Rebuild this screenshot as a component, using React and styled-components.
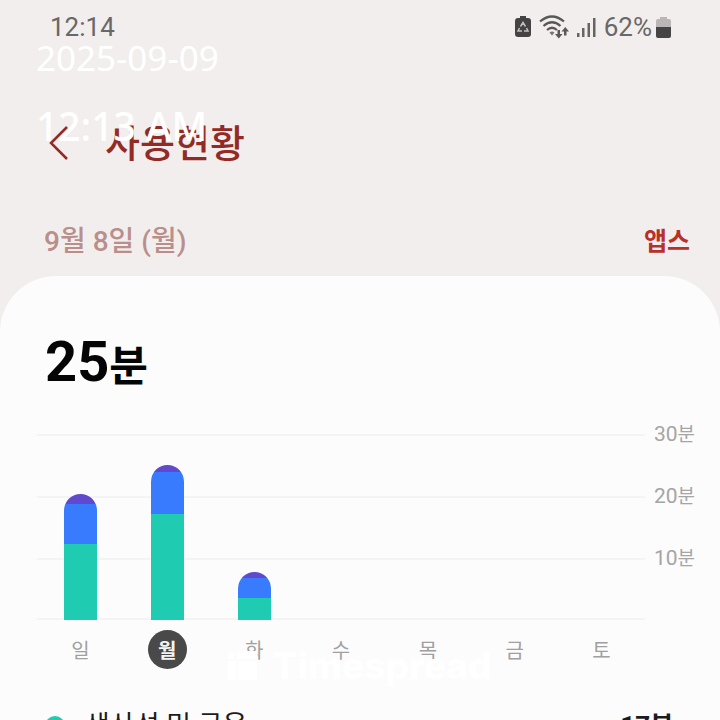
import React from "react";
import styled, { createGlobalStyle } from "styled-components";

const GlobalStyle = createGlobalStyle`
  * { box-sizing: border-box; }
  body {
    margin: 0;
    background: #f2eeed;
    font-family: Roboto, "Noto Sans CJK KR", sans-serif;
  }
  h1, h2, p { margin: 0; }
`;

const Screen = styled.div`
  position: relative;
  height: 100vh;
  overflow: hidden;
`;

const StatusBar = styled.div`
  display: flex;
  align-items: center;
  justify-content: space-between;
  height: 54px;
  padding: 0 49px 0 50px;
  color: #6a6767;
  font-size: 26px;
  line-height: 32px;
`;

const StatusIcons = styled.div`
  display: flex;
  align-items: center;
  gap: 8px;
`;

const Charge = styled.span`
  display: flex;
  align-items: center;
  gap: 4px;
`;

const Header = styled.header`
  display: flex;
  align-items: center;
  gap: 35px;
  height: 170px;
  padding: 10px 48px 0;
  color: #922b25;
`;

const BackButton = styled.button`
  display: flex;
  padding: 0;
  border: 0;
  background: none;
  color: inherit;
`;

const Title = styled.h1`
  font-size: 38px;
  line-height: 48px;
  font-weight: 500;
`;

const SubHeader = styled.div`
  display: flex;
  align-items: flex-start;
  justify-content: space-between;
  height: 52px;
  padding: 0 30px 0 44px;
`;

const DateLabel = styled.p`
  color: #b98f8b;
  font-size: 28px;
  line-height: 36px;
  font-weight: 500;
`;

const AppsLink = styled.a`
  color: #b9302a;
  font-size: 25px;
  line-height: 36px;
  font-weight: 700;
  text-decoration: none;
`;

const Panel = styled.main`
  padding: 56px 26px 0 37px;
  border-radius: 56px 56px 0 0;
  background: #fcfcfc;
`;

const Total = styled.h2`
  padding-left: 8px;
  color: #050505;
  font-size: 56px;
  line-height: 60px;
  font-weight: 700;
`;

const TotalUnit = styled.span`
  font-size: 42px;
  line-height: 48px;
`;

const Chart = styled.section`
  display: grid;
  grid-template-columns: 1fr 40px;
  column-gap: 9px;
  margin-top: 42px;
`;

const Plot = styled.div`
  display: grid;
  grid-template-columns: repeat(7, 1fr);
  align-items: end;
  height: 186px;
  box-shadow: inset 0 -2px #f4f4f4;
  background: repeating-linear-gradient(#f4f4f4 0 2px, transparent 2px 62px);
`;

const Bar = styled.div`
  display: flex;
  flex-direction: column;
  justify-self: center;
  width: 33px;
  overflow: hidden;
  border-radius: 17px 17px 0 0;
`;

const Segment = styled.div`
  height: ${(p) => p.$size}px;
  background: ${(p) => p.$tone};
`;

const Axis = styled.div`
  display: flex;
  flex-direction: column;
  margin-top: -14px;
  color: #a5a5a5;
  font-size: 21px;
`;

const Tick = styled.span`
  height: 62px;
  line-height: 28px;
  white-space: nowrap;
`;

const TickUnit = styled.span`
  font-size: 19px;
`;

const Days = styled.div`
  display: grid;
  grid-template-columns: repeat(7, 1fr);
  justify-items: center;
  margin-top: 10px;
`;

const Day = styled.button`
  width: 39px;
  height: 39px;
  padding: 3px 0 0;
  border: 0;
  border-radius: 50%;
  background: ${(p) => (p.$active ? "#494949" : "transparent")};
  color: ${(p) => (p.$active ? "#f4f4f4" : "#a0a0a0")};
  font: inherit;
  font-size: 20px;
  line-height: 36px;
  font-weight: ${(p) => (p.$active ? 700 : 400)};
`;

const UsageRow = styled.div`
  display: flex;
  align-items: center;
  height: 60px;
  margin-top: 27px;
  padding: 0 20px 0 8px;
  color: #1c1c1c;
  line-height: 36px;
`;

const Dot = styled.span`
  width: 20px;
  height: 20px;
  margin-right: 20px;
  border-radius: 50%;
  background: #1fccb2;
`;

const UsageName = styled.span`
  font-size: 27px;
`;

const UsageTime = styled.strong`
  margin-left: auto;
  font-size: 26px;
  font-weight: 700;
`;

const Stamp = styled.div`
  position: absolute;
  top: 34px;
  left: 36px;
  color: #fff;
  font-family: "Noto Sans", sans-serif;
`;

const StampDate = styled.p`
  font-size: 35px;
  line-height: 48px;
`;

const StampTime = styled.p`
  margin-top: 14px;
  font-size: 39px;
  line-height: 60px;
  font-weight: 500;
`;

const Watermark = styled.div`
  position: absolute;
  right: 0;
  bottom: 32px;
  left: 0;
  display: flex;
  align-items: center;
  justify-content: center;
  gap: 14px;
  color: #fff;
  font-family: Inter, sans-serif;
  font-size: 37px;
  line-height: 44px;
  font-weight: 800;
`;

const GREEN = "#1fccb2";
const BLUE = "#397bff";
const PURPLE = "#6049cc";

const days = [
  { name: "일", segments: [10, 40, 76] },
  { name: "월", segments: [7, 42, 106], active: true },
  { name: "화", segments: [6, 20, 22] },
  { name: "수" },
  { name: "목" },
  { name: "금" },
  { name: "토" },
];

function SaverIcon() {
  return (
    <svg width="16" height="22" viewBox="0 0 16 22" aria-hidden="true">
      <path d="M5 0h6v2h2q3 0 3 3v13q0 3-3 3H3q-3 0-3-3V5q0-3 3-3h2z" fill="#454243" />
      <path d="M5.500 10.500 8 6.500l2.500 4M4.500 12 3 15h4M9 15h4l-1.500-3" fill="none" stroke="#c4c0c0" strokeWidth="1.500" />
    </svg>
  );
}

function WifiIcon() {
  return (
    <svg width="30" height="24" viewBox="0 0 30 24" aria-hidden="true">
      <g fill="none" stroke="#5b5858" strokeWidth="2.200">
        <path d="M1 6.500Q13-3.500 25 6.500" />
        <path d="M4.500 11Q13 3.500 21.500 11" />
        <path d="M8 15Q13 10.500 18 15" />
      </g>
      <path d="M10.500 17.500Q13 15.500 15.500 17.500L13 20.500z" fill="#777474" />
      <path d="M18.500 15h2.500v4h2.500l-3.700 4.500L16 19h2.500zM25 20.500h2.500v-4H30L26.300 12 22.500 16.500H25z" fill="#5b5858" />
    </svg>
  );
}

function SignalIcon() {
  return (
    <svg width="19" height="20" viewBox="0 0 19 20" aria-hidden="true">
      <path d="M0 16h2.500v4H0zM5 11h2.500v9H5zM10.500 6H13v14h-2.500zM16 1h2.500v19H16z" fill="#676464" />
    </svg>
  );
}

function BatteryIcon() {
  return (
    <svg width="15" height="21" viewBox="0 0 15 21" aria-hidden="true">
      <path d="M4 0h7v2h2q2 0 2 2v7H0V4q0-2 2-2h2z" fill="#bab6b6" />
      <path d="M0 10h15v9q0 2-2 2H2q-2 0-2-2z" fill="#474445" />
    </svg>
  );
}

export default function App() {
  return (
    <Screen>
      <GlobalStyle />
      <StatusBar>
        <span>12:14</span>
        <StatusIcons>
          <SaverIcon />
          <WifiIcon />
          <SignalIcon />
          <Charge>
            62%
            <BatteryIcon />
          </Charge>
        </StatusIcons>
      </StatusBar>
      <Header>
        <BackButton aria-label="뒤로">
          <svg width="22" height="36" viewBox="0 0 22 36" aria-hidden="true">
            <path d="M19 1 3 17l16 16" fill="none" stroke="currentColor" strokeWidth="2.500" />
          </svg>
        </BackButton>
        <Title>사용현황</Title>
      </Header>
      <SubHeader>
        <DateLabel>9월 8일 (월)</DateLabel>
        <AppsLink href="#apps">앱스</AppsLink>
      </SubHeader>
      <Panel>
        <Total>
          25<TotalUnit>분</TotalUnit>
        </Total>
        <Chart>
          <Plot>
            {days.filter((d) => d.segments).map((d) => (
              <Bar key={d.name}>
                <Segment $size={d.segments[0]} $tone={PURPLE} />
                <Segment $size={d.segments[1]} $tone={BLUE} />
                <Segment $size={d.segments[2]} $tone={GREEN} />
              </Bar>
            ))}
          </Plot>
          <Axis>
            {[30, 20, 10].map((n) => (
              <Tick key={n}>
                {n}
                <TickUnit>분</TickUnit>
              </Tick>
            ))}
          </Axis>
          <Days>
            {days.map((d) => (
              <Day key={d.name} $active={d.active}>{d.name}</Day>
            ))}
          </Days>
        </Chart>
        <UsageRow>
          <Dot />
          <UsageName>생산성 및 금융</UsageName>
          <UsageTime>17분</UsageTime>
        </UsageRow>
      </Panel>
      <Stamp>
        <StampDate>2025-09-09</StampDate>
        <StampTime>12:13 AM</StampTime>
      </Stamp>
      <Watermark>
        <svg width="30" height="30" viewBox="0 0 30 30" aria-hidden="true">
          <path d="M3 1h3v7H0V4q0-3 3-3zM9 0h20v8H9zM0 10h8v19H0zM10 10h19v19H10z" fill="#fff" />
        </svg>
        <span>Timespread</span>
      </Watermark>
    </Screen>
  );
}
